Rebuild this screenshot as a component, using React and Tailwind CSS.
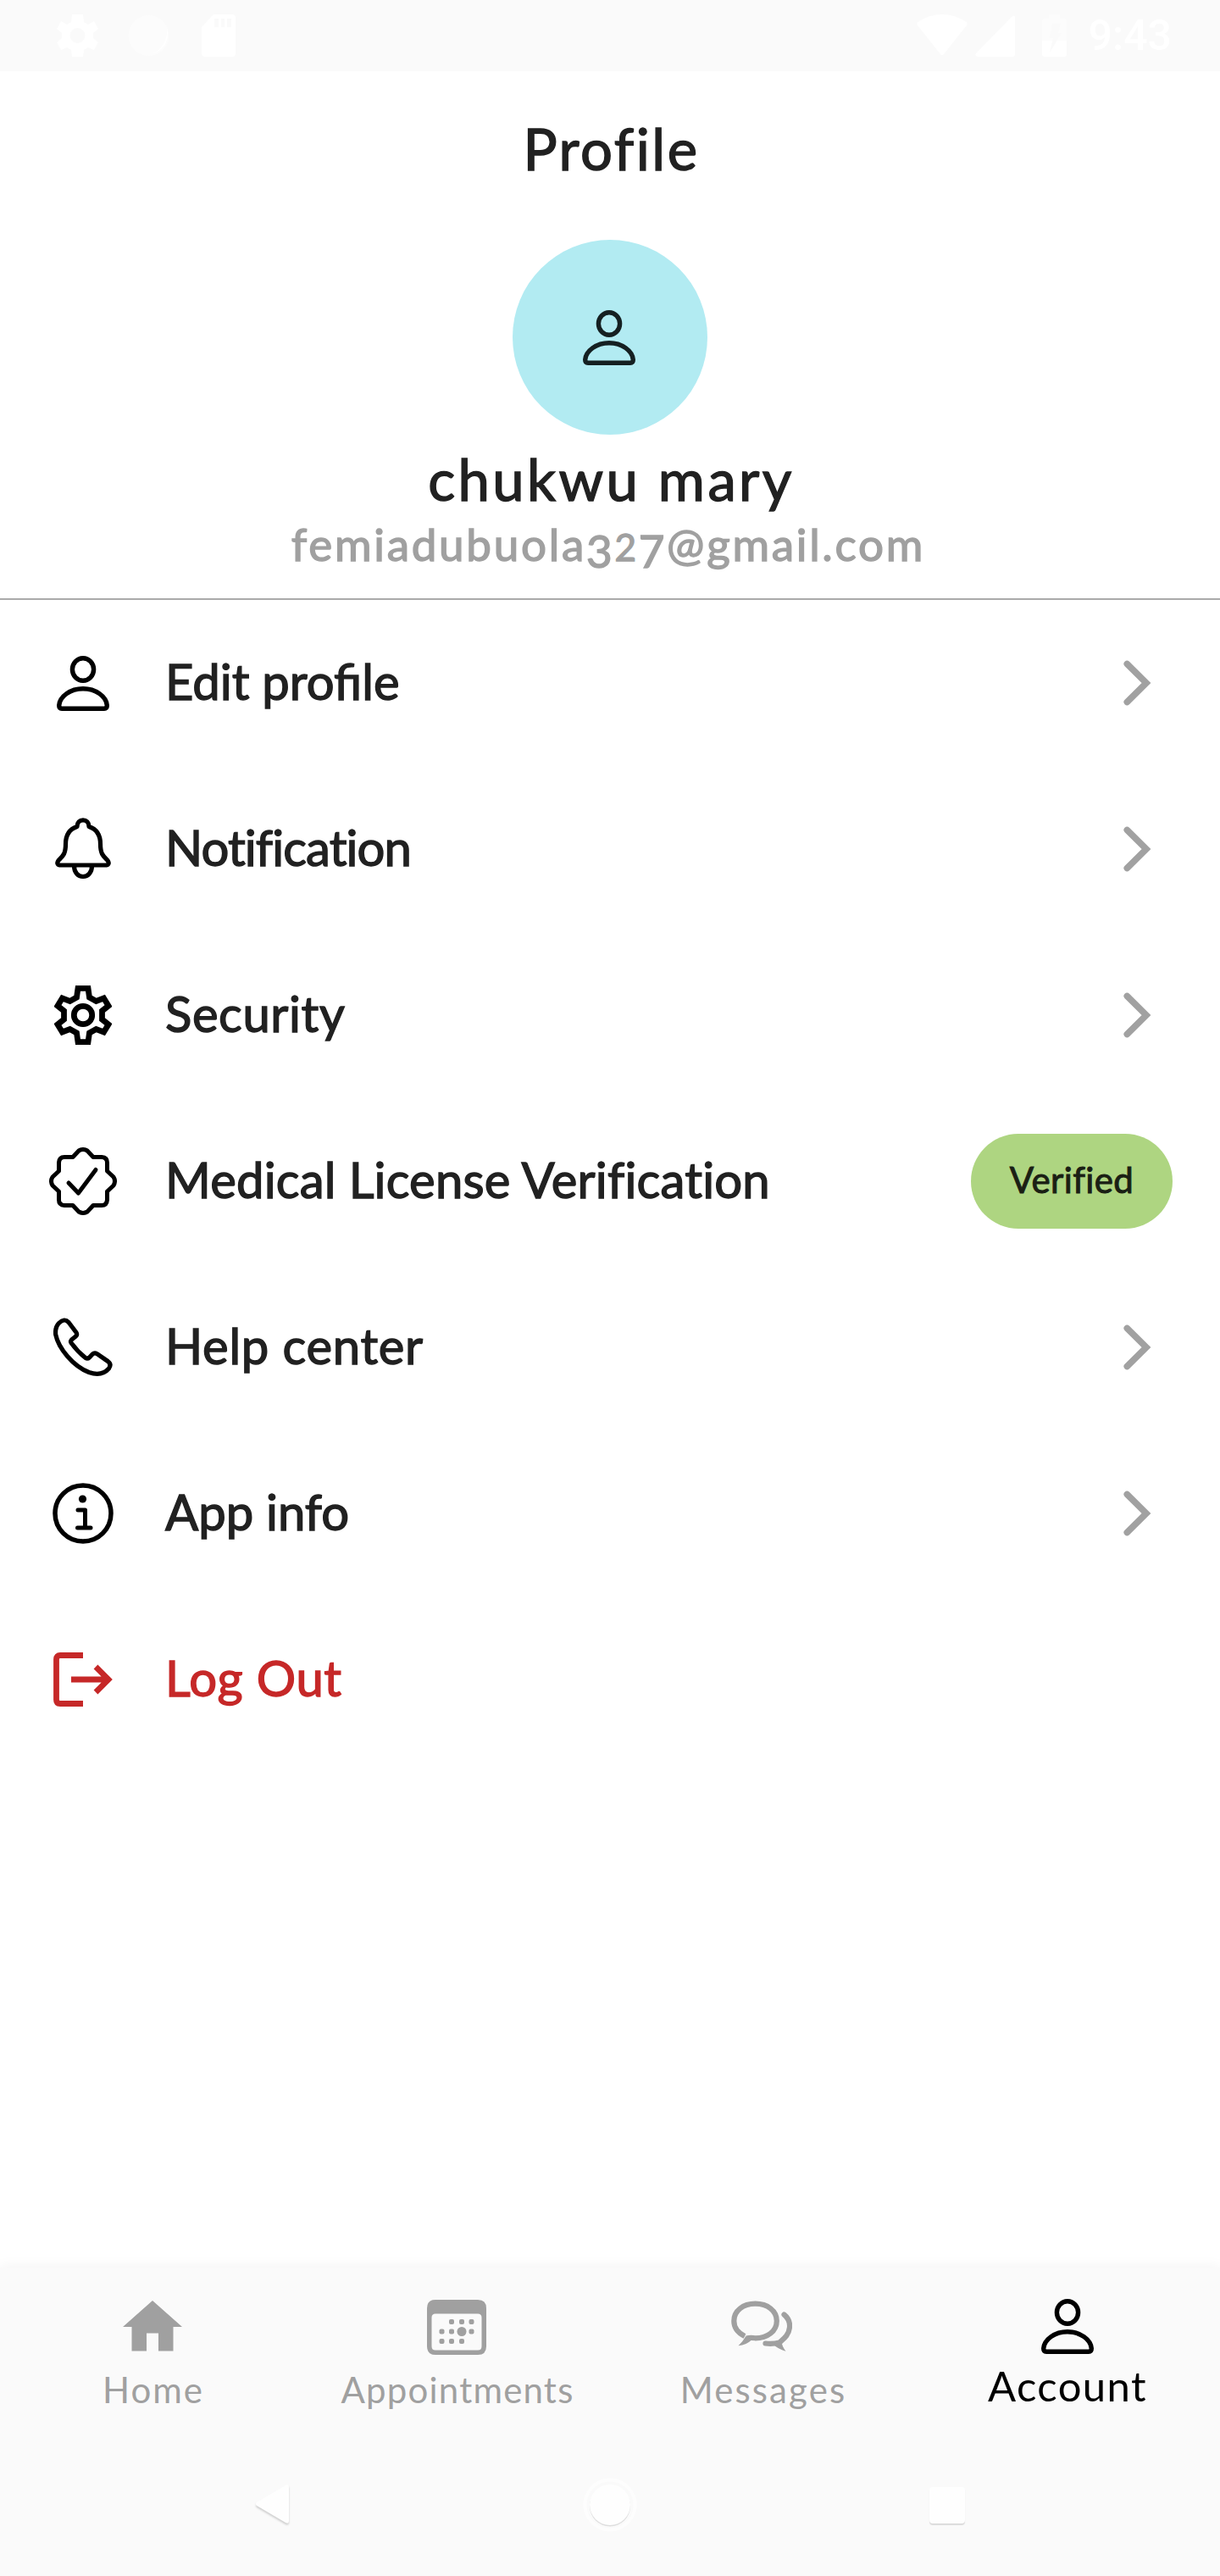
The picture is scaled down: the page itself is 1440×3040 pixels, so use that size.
const FONT = 'Lato, "Liberation Sans", sans-serif';

function PersonIcon({ className }) {
  return (
    <svg className={className} viewBox="0 0 62 65" fill="none" stroke="currentColor" strokeWidth="5.400">
      <ellipse cx="31" cy="16" rx="12.6" ry="13.3" />
      <path d="M6 62.300H56Q59.300 62.300 59.300 58.500C58.500 48 46 38.700 31 38.700S3.500 48 2.700 58.500Q2.700 62.300 6 62.300Z" />
    </svg>
  );
}

function BellIcon() {
  return (
    <svg className="h-[74px] w-[66px]" viewBox="0 0 66 74" fill="none" stroke="currentColor" strokeWidth="5.200" strokeLinejoin="round">
      <path d="M26 10.500C26 5.500 29 2.800 33 2.800S40 5.500 40 10.500C49 13.500 53.500 21 53.500 31C53.500 43 57 45.500 62 50.500Q65 55 60.500 56H5.500Q1 55 4 50.500C9 45.500 12.500 43 12.500 31C12.500 21 17 13.500 26 10.500Z" />
      <path d="M22.500 57C22.500 64.500 27 69.500 33 69.500S43.500 64.500 43.500 57" />
    </svg>
  );
}

function GearIcon() {
  return (
    <svg className="h-[70px] w-[68px]" viewBox="0 0 68 70" fill="none" stroke="currentColor" strokeWidth="6.800">
      <path d="M28 3.300H40L41.500 14L49.500 18.500L58.500 15L64 24L56.500 30V40L64 46L58.500 55L49.500 51.500L41.500 56L40 66.700H28L26.500 56L18.500 51.500L9.500 55L4 46L11.500 40V30L4 24L9.500 15L18.500 18.500L26.500 14Z" />
      <circle cx="34" cy="35" r="10.700" />
    </svg>
  );
}

function BadgeIcon() {
  return (
    <svg className="h-[80px] w-[80px]" viewBox="0 0 80 80" fill="none" stroke="currentColor" strokeWidth="5" strokeLinecap="round" strokeLinejoin="round">
      <path d="M35 4Q40 1 45 4L52 11.500H62Q68.500 12 68.500 18V28L76 35Q79 40 76 45L68.500 52V62Q68 68.500 62 68.500H52L45 76Q40 79 35 76L28 68.500H18Q11.500 68 11.500 62V52L4 45Q1 40 4 35L11.500 28V18Q12 11.500 18 11.500H28Z" />
      <path d="M23 42L34.500 54L55 26.500" />
    </svg>
  );
}

function PhoneIcon() {
  return (
    <svg className="h-[70px] w-[70px]" viewBox="0 0 70 70" fill="none" stroke="currentColor" strokeWidth="5.200" strokeLinejoin="round">
      <path d="M6.500 6.500Q13 0 18 5.500L27 17.500Q28.500 20 26.500 22L21.500 26Q19.800 27.700 21 29.700Q28.500 40 38 47.500Q40.300 49 42.500 47L46 43.200Q48.500 41 51.500 42.700L64.300 51.500Q69 55 65.500 60C59 67.500 51 67.500 42 64.500C23 57 6 36 2.700 20Q1.800 11.500 6.500 6.500Z" />
    </svg>
  );
}

function InfoIcon() {
  return (
    <svg className="h-[72px] w-[72px]" viewBox="0 0 72 72" fill="none" stroke="currentColor" strokeWidth="5.500">
      <circle cx="36" cy="36" r="33" />
      <circle cx="35.500" cy="19" r="4.600" fill="currentColor" stroke="none" />
      <path d="M30 32H38.500V53M29.500 53H45" strokeWidth="5" strokeLinecap="round" strokeLinejoin="round" />
    </svg>
  );
}

function LogoutIcon() {
  return (
    <svg className="h-[64px] w-[70px]" viewBox="0 0 70 64" fill="none" stroke="currentColor" strokeWidth="6.800">
      <path d="M35 3.500H8Q3.500 3.500 3.500 8V56Q3.500 60.500 8 60.500H35" />
      <path d="M21 32H64M50 17L65 32L50 47" />
    </svg>
  );
}

function Chevron() {
  return (
    <svg className="mr-[24px] h-[54px] w-[34px]" viewBox="0 0 34 54" fill="none" stroke="#a1a1a1" strokeWidth="7.600" strokeLinecap="round">
      <path d="M4.300 4.500L27 27L4.300 49.500" />
    </svg>
  );
}

function HomeIcon() {
  return (
    <svg className="h-[66px] w-[70px]" viewBox="0 0 70 66" fill="currentColor">
      <path d="M35 1L70 32H59.500V60.500H42V39.500H28V60.500H10.500V32H0Z" />
    </svg>
  );
}

function CalendarIcon() {
  const dots = [[29, 26], [41, 26], [52.500, 26], [17.500, 37.500], [29, 37.500], [52.500, 37.500], [17.500, 49], [29, 49], [41, 49]];
  return (
    <svg className="mr-[3px] h-[66px] w-[70px]" viewBox="0 0 70 66" fill="currentColor">
      <path fillRule="evenodd" d="M10 0H60Q70 0 70 10V55Q70 65 60 65H10Q0 65 0 55V10Q0 0 10 0ZM10 16.500Q5.500 16.500 5.500 21V55Q5.500 59.500 10 59.500H60Q64.500 59.500 64.500 55V21Q64.500 16.500 60 16.500Z" />
      {dots.map(([x, y]) => (
        <rect key={x + "-" + y} x={x - 3} y={y - 3} width="6" height="6" rx="2" />
      ))}
      <circle cx="41" cy="37.500" r="5.500" />
    </svg>
  );
}

function ChatIcon() {
  return (
    <svg className="mr-[2px] h-[66px] w-[72px]" viewBox="0 0 72 66" fill="none" stroke="currentColor" strokeWidth="6.200">
      <path d="M16 43C8 39 3.300 33 3.300 25C3.300 13 14 4.700 28.500 4.700S53.800 13 53.800 25S43 45.300 28.500 45.300Q23 44.500 18 45.500" />
      <path d="M12 40L17 43.500Q14 49 8.500 54.300Q18 53.500 24 47.500Z" fill="currentColor" stroke="none" />
      <path d="M62.500 17.500C68 22 69.500 27 69 32.500C68 42 62 46 57 50.500Q49 52.500 40.500 51.500" strokeLinecap="round" />
      <path d="M59 48Q60 55 64.500 60.700Q55 58 50 53Z" fill="currentColor" stroke="none" />
    </svg>
  );
}

const ROWS = [
  { label: "Edit profile", icon: <PersonIcon className="h-[65px] w-[62px]" />, track: "tracking-[0px]" },
  { label: "Notification", icon: <BellIcon />, track: "tracking-[-0.9px]" },
  { label: "Security", icon: <GearIcon />, track: "tracking-[0.6px]" },
  { label: "Medical License Verification", icon: <BadgeIcon />, track: "tracking-[0.2px]", badge: "Verified" },
  { label: "Help center", icon: <PhoneIcon />, track: "tracking-[0.7px]" },
  { label: "App info", icon: <InfoIcon />, track: "tracking-[0px]" },
  { label: "Log Out", icon: <LogoutIcon />, track: "tracking-[0.6px]", danger: true },
];

const TABS = [
  { label: "Home", icon: <HomeIcon />, track: "tracking-[2px] mr-[-2px]" },
  { label: "Appointments", icon: <CalendarIcon />, track: "tracking-[1.2px]" },
  { label: "Messages", icon: <ChatIcon />, track: "tracking-[2.1px] mr-[-2px]" },
];

function StatusBar() {
  return (
    <div className="flex h-[84px] items-center justify-between bg-[#fafafa] pr-[57px] pl-[67px] text-white">
      <div className="flex items-center gap-[35px]">
        <svg className="h-[50px] w-[49px]" viewBox="0 0 49 50" fill="currentColor" fillRule="evenodd">
          <path d="M18 0H31L32 9L37 12L44 8L49 17L43 22V28L49 33L44 42L37 39L32 42L31 50H18L17 42L12 39L5 42L0 33L6 28V22L0 17L5 8L12 12L17 9ZM24.500 16A9 9 0 1 0 24.500 34A9 9 0 1 0 24.500 16Z" />
        </svg>
        <svg className="h-[50px] w-[50px]" viewBox="0 0 50 50">
          <circle cx="24.500" cy="25" r="24" fill="#fcfcfc" />
          <path d="M46 16A24 24 0 0 1 16 46Q30 50 39 39Q47 30 46 16Z" fill="#fff" />
        </svg>
        <svg className="ml-[2px] h-[50px] w-[40px]" viewBox="0 0 40 50" fill="currentColor">
          <path d="M14 0H36Q40 0 40 4V46Q40 50 36 50H4Q0 50 0 46V15Z" />
          <path d="M15 5H20V15H15ZM23 5H27V15H23ZM30 5H35V15H30Z" fill="#fafafa" />
        </svg>
      </div>
      <div className="flex items-center">
        <svg className="h-[50px] w-[60px]" viewBox="0 0 60 50" fill="currentColor">
          <path d="M1 9Q30 -9 59 9Q60 11 59 13L32 47Q30 49 28 47L1 13Q0 11 1 9Z" />
        </svg>
        <svg className="ml-[9px] h-[50px] w-[47px]" viewBox="0 0 47 50" fill="currentColor">
          <path d="M43 3Q47 0 47 4V47Q47 50 44 50H3Q-1 49 1 46Z" />
        </svg>
        <svg className="ml-[32px] h-[50px] w-[29px]" viewBox="0 0 29 50">
          <path d="M8 0H21V5H26Q29 5 29 8V31H0V8Q0 5 3 5H8Z" fill="#fcfcfc" />
          <path d="M0 31H29V47Q29 50 26 50H3Q0 50 0 47Z" fill="#fff" />
          <path d="M12 11H22L19 22H23L9 45L13 28H9Z" fill="#fafafa" />
        </svg>
        <span className="ml-[26px] text-[50px] leading-[50px] font-medium" style={{ fontFamily: "Roboto, sans-serif" }}>9:43</span>
      </div>
    </div>
  );
}

export default function App() {
  return (
    <div className="flex h-[3040px] w-[1440px] flex-col overflow-hidden bg-white text-[#212121]" style={{ fontFamily: FONT }}>
      <StatusBar />

      <header className="flex h-[624px] flex-col items-center border-b-2 border-[#aaaaaa] pt-[51px]">
        <h1 className="h-[80px] text-[67px] leading-[80px] whitespace-nowrap [-webkit-text-stroke:1.4px]">
          <span className="mr-[-3px] tracking-[2.5px]">Profile</span>
        </h1>
        <div className="mt-[68px] flex h-[230px] w-[230px] shrink-0 items-center justify-center rounded-full bg-[#b2ebf2]">
          <PersonIcon className="mr-[2px] h-[65px] w-[62px] text-[#152022]" />
        </div>
        <h2 className="mt-[12px] h-[80px] text-[67px] leading-[80px] whitespace-nowrap [-webkit-text-stroke:1.4px]">
          <span className="mr-[-3px] tracking-[3.4px]">chukwu mary</span>
        </h2>
        <p className="mt-[2px] mr-[4px] h-[70px] text-[53px] leading-[70px] whitespace-nowrap text-[#a0a0a0] [-webkit-text-stroke:1.4px]">
          <span className="tracking-[2.7px]">
            femiadubuola<span className="align-[-8px]">3</span><span className="text-[44px]">2</span><span className="align-[-8px]">7</span>@gmail.com
          </span>
        </p>
      </header>

      <ul className="flex flex-col">
        {ROWS.map((row) => (
          <li key={row.label} className={row.danger ? "flex h-[196px] items-center pr-[56px] text-[#c62828]" : "flex h-[196px] items-center pr-[56px]"}>
            <span className={row.danger ? "flex w-[195px] justify-center" : "flex w-[195px] justify-center text-black"}>{row.icon}</span>
            <span className="mb-[4px] flex-1 text-[58px] leading-[70px] whitespace-nowrap [-webkit-text-stroke:1.4px]">
              <span className={row.track}>{row.label}</span>
            </span>
            {row.badge && (
              <span className="flex h-[112px] w-[238px] items-center justify-center rounded-full bg-[#aed581] pb-[3px] text-[42px] text-[#1a1f14] [-webkit-text-stroke:1px]">
                <span className="tracking-[0.4px]">{row.badge}</span>
              </span>
            )}
            {!row.badge && !row.danger && <Chevron />}
          </li>
        ))}
      </ul>

      <div className="flex-1" />

      <nav className="grid h-[224px] grid-cols-4 bg-[#fafafa] shadow-[0_0_16px_rgba(0,0,0,0.06)]">
        {TABS.map((tab) => (
          <div key={tab.label} className="flex flex-col items-center pt-[38px] text-[#a0a0a0]">
            {tab.icon}
            <span className="mt-[15px] text-[42px] leading-[50px] whitespace-nowrap">
              <span className={tab.track}>{tab.label}</span>
            </span>
          </div>
        ))}
        <div className="flex flex-col items-center pt-[37px] text-black">
          <PersonIcon className="h-[65px] w-[62px]" />
          <span className="mt-[8px] text-[49px] leading-[58px] whitespace-nowrap">
            <span className="tracking-[1.4px]">Account</span>
          </span>
        </div>
      </nav>

      <div className="z-10 flex h-[140px] items-center justify-between bg-[#fafafa] pr-[301px] pb-[28px] pl-[301px]">
        <svg className="h-[52px] w-[42px] drop-shadow-[0_2px_1px_rgba(0,0,0,0.18)]" viewBox="0 0 42 52" fill="#fefefe">
          <path d="M36 3Q40 1 40 5V45Q40 49 36 47L2 27Q0 25 2 23Z" />
        </svg>
        <svg className="h-[64px] w-[64px]" viewBox="0 0 64 64">
          <circle cx="32" cy="32" r="29.500" fill="none" stroke="#fdfdfd" strokeWidth="4" />
          <circle cx="32" cy="33.500" r="24" fill="#dedede" />
          <circle cx="32" cy="32" r="24" fill="#fefefe" />
        </svg>
        <div className="h-[43px] w-[42px] rounded-[4px] bg-[#fefefe] shadow-[0_2px_1px_rgba(0,0,0,0.12)]" />
      </div>
    </div>
  );
}
